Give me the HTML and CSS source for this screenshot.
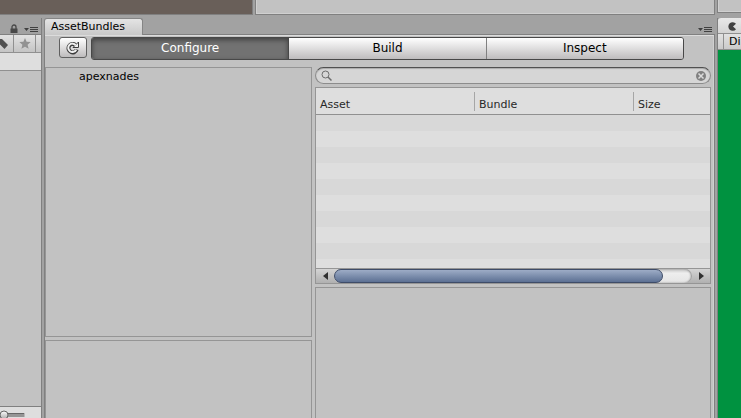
FILE: index.html
```
<!DOCTYPE html>
<html lang="en">
<head>
<meta charset="utf-8">
<title>AssetBundles</title>
<link rel="stylesheet" href="styles.css">
</head>
<body>
<div class="editor">
  <div class="top-docks">
    <div class="dock dock-scene"></div>
    <div class="dock dock-wide"></div>
    <div class="dock dock-end"></div>
  </div>
  <div class="docks">
    <aside class="project">
      <div class="project-tabs">
        <svg class="icon-lock" width="8" height="10" viewBox="0 0 8 10" aria-hidden="true"><path d="M2 5V3a2 2 0 0 1 4 0v2" fill="none" stroke="#484848" stroke-width="1.3"/><path d="M.5 4.500h7v4.500h-7z" fill="#484848"/></svg>
        <svg class="icon-menu" width="14" height="6" viewBox="0 0 14 6" aria-hidden="true"><path d="M0 1h5L2.500 4zM6 0h8v1H6zM6 2h8v1H6zM6 4h8v1H6z" fill="#404040"/></svg>
      </div>
      <div class="project-tools">
        <button class="tool tool-label" aria-label="Labels"><svg width="8" height="10" viewBox="0 0 8 10"><path d="M0 0h2L8 6 4.500 10 0 5.500z" fill="#505050"/></svg></button>
        <button class="tool tool-star" aria-label="Favorites"><svg width="12" height="11" viewBox="0 0 12 11"><path d="M6 0l1.600 3.800 4.100.3-3.100 2.700 1 4L6 8.700l-3.600 2.100 1-4L.3 4.100l4.100-.3z" fill="#929292"/></svg></button>
      </div>
      <div class="project-path"></div>
      <div class="project-files"></div>
      <div class="project-foot">
        <svg width="26" height="12" viewBox="0 0 26 12" aria-hidden="true"><defs><linearGradient id="knob" x2="0" y2="1"><stop stop-color="#fff"/><stop offset="1" stop-color="#aaa"/></linearGradient></defs><path d="M0 3h24.500v4H0z" fill="#959595"/><path d="M0 3h24v1H0z" fill="#666"/><circle cx="4" cy="5" r="4" fill="url(#knob)" stroke="#666"/></svg>
      </div>
    </aside>
    <main class="bundles">
      <div class="tab-row">
        <h1 class="tab">AssetBundles</h1>
        <svg class="icon-menu" width="14" height="6" viewBox="0 0 14 6" aria-hidden="true"><path d="M0 1h5L2.500 4zM6 0h8v1H6zM6 2h8v1H6zM6 4h8v1H6z" fill="#404040"/></svg>
      </div>
      <div class="panel">
        <div class="toolbar">
          <button class="refresh" aria-label="Refresh"><svg width="14" height="14" viewBox="0 0 14 14"><path d="M10.700 8.500A4.200 4.200 0 1 1 9.300 3.900" fill="none" stroke="#3c3c3c" stroke-width="4"/><path d="M12.500 1v5.500H7z" fill="#f0f0f0" stroke="#3c3c3c"/><path d="M10.200 8.700A4.200 4.200 0 1 1 9.800 4.300" fill="none" stroke="#f0f0f0" stroke-width="2"/></svg></button>
          <div class="modes">
            <button class="mode mode-on" aria-pressed="true">Configure</button>
            <button class="mode">Build</button>
            <button class="mode">Inspect</button>
          </div>
        </div>
        <div class="split">
          <div class="column-tree">
            <div class="box tree"><div class="tree-item">apexnades</div></div>
            <div class="box fill"></div>
          </div>
          <div class="column-assets">
            <div class="search">
              <svg width="12" height="12" viewBox="0 0 12 12" aria-hidden="true"><circle cx="4.500" cy="4.500" r="3.500" fill="none" stroke="#6c6c6c"/><path d="M7 7l3.500 3.500" stroke="#6c6c6c" stroke-width="1.500"/></svg>
              <input class="search-input" type="text" aria-label="Search assets">
              <button class="clear" aria-label="Clear search"><svg width="10" height="10" viewBox="0 0 10 10"><circle cx="5" cy="5" r="5" fill="#808080"/><path d="M2.500 2.500l5 5M7.500 2.500l-5 5" stroke="#dcdcdc" stroke-width="1.500"/></svg></button>
            </div>
            <div class="box assets">
              <table class="asset-table">
                <thead><tr><th class="col">Asset</th><th class="col">Bundle</th><th>Size</th></tr></thead>
              </table>
              <div class="rows"></div>
              <div class="scrollbar">
                <button class="arrow" aria-label="Scroll left"><svg width="5" height="8" viewBox="0 0 5 8"><path d="M5 0v8L0 4z" fill="#303030"/></svg></button>
                <div class="track"><div class="thumb"></div></div>
                <button class="arrow" aria-label="Scroll right"><svg width="5" height="8" viewBox="0 0 5 8"><path d="M0 0v8l5-4z" fill="#303030"/></svg></button>
              </div>
            </div>
            <div class="box fill"></div>
          </div>
        </div>
      </div>
    </main>
    <aside class="game">
      <div class="game-tab"><svg width="9" height="9" viewBox="0 0 9 9" aria-hidden="true"><path d="M8 1.800A4.300 4.300 0 1 0 8 7.200L5 4.500z" fill="#404040"/></svg></div>
      <div class="game-tools"><span class="display">Di</span></div>
      <div class="game-view"></div>
    </aside>
  </div>
</div>
</body>
</html>
```
FILE: styles.css
```
* { box-sizing: border-box; }
body {
  margin: 0;
  background: #a2a2a2;
  color: #000;
  font: 11px/16px "DejaVu Sans", Verdana, sans-serif;
}
button { margin: 0; padding: 0; border: 0; background: none; font: inherit; color: inherit; }
svg { display: block; }
.editor { display: flex; flex-direction: column; height: 100vh; overflow: hidden; }

.top-docks { display: flex; gap: 2px; flex: 0 0 18px; align-items: flex-start; }
.dock { height: 15px; border: 1px solid #808080; border-top: 0; background: #c2c2c2; }
.dock-scene { flex: 0 0 253px; border-left: 0; background: #695f59; }
.dock-wide { flex: 1; box-shadow: inset 1px -1px #d0d0d0; }
.dock-end { flex: 0 0 24px; height: 13px; border-right: 0; box-shadow: inset 1px -1px #d0d0d0; }

.docks { flex: 1; display: flex; gap: 2px; min-height: 0; }

.project { flex: 0 0 42px; display: flex; flex-direction: column; border-right: 1px solid #808080; }
.project-tabs { display: flex; align-items: flex-end; justify-content: flex-end; gap: 6px; height: 16px; padding-right: 3px; }
.icon-menu { margin-bottom: 1px; }
.project-tools { display: flex; height: 19px; border-top: 1px solid #808080; border-bottom: 1px solid #909090; background: linear-gradient(#e2e2e2, #c4c4c4); }
.tool { display: flex; align-items: center; border-right: 1px solid #909090; }
.tool-label { width: 14px; }
.tool-star { width: 22px; justify-content: center; }
.project-path { height: 18px; border-bottom: 1px solid #909090; background: #dedede; }
.project-files { flex: 1; background: #c2c2c2; }
.project-foot { height: 12px; border-top: 1px solid #808080; background: #dedede; padding-top: 3px; overflow: hidden; }

.bundles { flex: 1; min-width: 0; display: flex; flex-direction: column; }
.tab-row { display: flex; justify-content: space-between; align-items: flex-end; height: 16px; padding-right: 3px; }
.tab {
  position: relative;
  margin: 0 0 -1px;
  height: 17px;
  padding: 0 17px 0 6px;
  border: 1px solid #858585;
  border-bottom: 0;
  border-radius: 3px 3px 0 0;
  background: linear-gradient(#e4e4e4, #c8c8c8);
  font: inherit;
}
.panel { flex: 1; display: flex; flex-direction: column; min-height: 0; border: 1px solid #808080; border-bottom: 0; background: #c2c2c2; box-shadow: inset 0 1px #dcdcdc, inset -1px 0 #d0d0d0; }

.toolbar { display: flex; gap: 4px; height: 32px; padding: 2px 30px 8px 14px; }
.refresh {
  display: flex; align-items: center; justify-content: center;
  width: 28px; height: 21px;
  border: 1px solid #606060; border-radius: 3px;
  background: linear-gradient(#fff, #bebcbd);
}
.modes { flex: 1; display: flex; height: 23px; border: 1px solid #484848; border-radius: 3px; overflow: hidden; }
.mode { flex: 1; border-right: 1px solid #808080; padding-bottom: 2px; background: linear-gradient(#fff, #bebcbd); font-size: 12px; }
.mode:last-child { border-right: 0; }
.mode-on { background: #727272; color: #fff; border-color: #484848; box-shadow: inset 0 2px 5px #404040; }

.split { flex: 1; display: grid; grid-template-columns: 267fr 396fr; gap: 3px; min-height: 0; padding-right: 3px; }
.column-tree, .column-assets { display: flex; flex-direction: column; gap: 3px; min-height: 0; }
.box { border: 1px solid #959595; }
.tree { flex: 0 0 270px; padding: 1px 0 0 33px; }
.fill { flex: 1; border-bottom: 0; }

.search {
  display: flex; align-items: center; flex: 0 0 17px;
  padding: 0 4px 0 5px;
  border: 1px solid #8c8c8c; border-top-color: #505050; border-radius: 9px;
  background: #d6d6d6;
  box-shadow: inset 0 1px 1px #aaa;
}
.search-input { flex: 1; min-width: 0; height: 14px; padding: 0 4px; border: 0; outline: 0; background: none; font: inherit; }

.assets { flex: 0 0 197px; display: flex; flex-direction: column; }
.asset-table { width: 100%; table-layout: fixed; border-spacing: 0; background: #dedede; color: #282828; }
.asset-table th { height: 27px; padding: 9px 4px 1px; border-bottom: 1px solid #909090; font-weight: normal; text-align: left; }
.asset-table .col { width: 159px; background: linear-gradient(#a6a6a6, #a6a6a6) right 4px / 1px 19px no-repeat; }
.rows { flex: 1; background: repeating-linear-gradient(#d8d8d8 0 16px, #dedede 16px 32px); }
.scrollbar { display: flex; align-items: center; height: 15px; border-top: 1px solid #959595; background: linear-gradient(#d4d4d4, #b0b0b0); }
.arrow { display: flex; justify-content: center; width: 18px; }
.track { flex: 1; height: 14px; border-radius: 7px; background: linear-gradient(#c4c4c4, #eee 30%, #e4e4e4); box-shadow: inset -1px 0 2px #888; }
.thumb { width: 92%; height: 14px; border: 1px solid #3e4c68; border-radius: 7px; background: linear-gradient(#9dacc6, #5c7093); }

.game { flex: 0 0 24px; display: flex; flex-direction: column; overflow: hidden; border-left: 1px solid #808080; }
.game-tab { height: 16px; margin-top: -1px; padding: 4px 0 0 10px; border-top: 1px solid #858585; border-radius: 3px 0 0; background: linear-gradient(#e8e8e8, #d4d4d4); }
.game-tools { height: 17px; border-top: 1px solid #909090; border-bottom: 1px solid #909090; background: linear-gradient(#e2e2e2, #cacaca); padding-left: 5px; }
.display { display: block; padding-left: 5px; border-left: 1px solid #909090; line-height: 15px; }
.game-view { flex: 1; background: #009240; }
```
